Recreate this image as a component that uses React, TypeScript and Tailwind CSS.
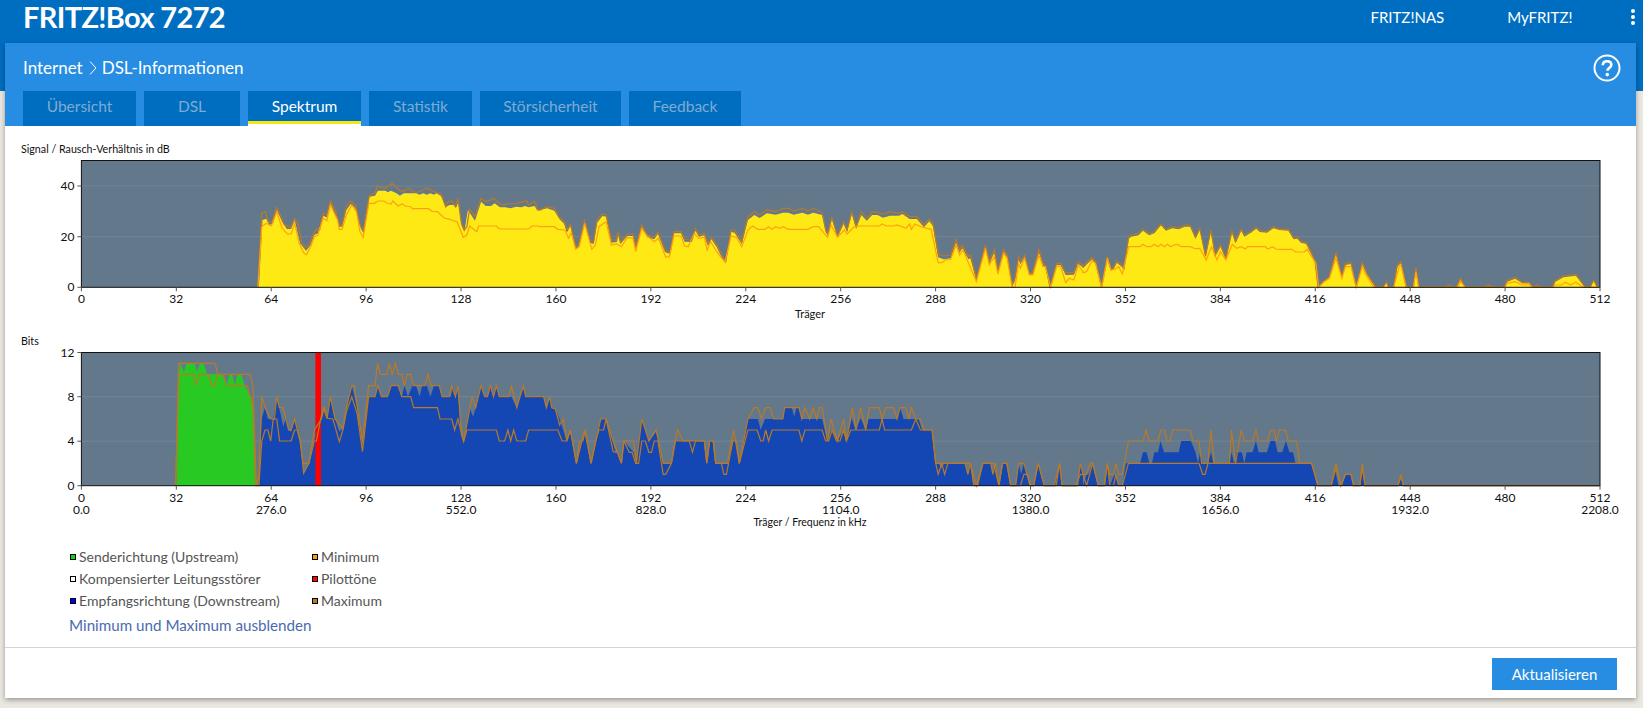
import React from "react";

type P = [number, number];
const sx = 2.8;
const str = (pts: P[]) => pts.map(([x, y]) => `${x.toFixed(1)},${y.toFixed(1)}`).join(" ");

const B1 = 287.3;
const B2 = 485.7;
const z1 = (ox: number, pts: number[][], dy = 0) => pts.map(([x, y]) => [ox + x / sx, Math.min(150 + y / 3 + dy, B1)] as P);
const z3 = (pts: number[][]) => pts.map(([x, y]) => [x / sx, 130 + y / 3] as P);
const z2 = (ox: number, pts: number[][]) => pts.map(([x, y]) => [ox + x / sx, 335 + y / 3] as P);

const max1: P[] = [
  ...z3([[722,472],[733,250],[743,245],[752,278],[762,275],[775,232],[785,255],[795,282],[808,292],[815,290],[825,265],[835,285],[845,340],[857,352],[868,340],[880,305],[890,295],[895,300],[905,250],[915,255],[925,212],[940,245],[950,285],[958,285],[970,228],[982,213],[995,225],[1008,285],[1018,300],[1033,200],[1045,190],[1050,190],[1057,168],[1065,172],[1078,175],[1098,160],[1120,182],[1130,184],[1142,175],[1155,182],[1165,188],[1180,182],[1195,175],[1205,178],[1212,184],[1225,188],[1235,192],[1248,230],[1255,215],[1265,213],[1275,230],[1282,205],[1292,280],[1300,300],[1307,290],[1315,238],[1330,260],[1347,205],[1360,215],[1370,212],[1382,205],[1398,220],[1410,225],[1425,220],[1440,222],[1465,215],[1475,212],[1480,225],[1497,213],[1505,238]]),
  ...z1(540,[[0,180],[20,170],[40,175],[55,203],[68,215],[75,240],[85,222],[100,290],[108,285],[125,212],[140,270],[150,275],[160,210],[175,192],[185,195],[200,270],[215,270],[218,245],[225,275],[245,252],[260,252],[268,290],[285,225],[300,255],[320,262],[330,245],[350,300],[365,305],[375,245],[395,245],[405,268],[425,270],[435,235],[445,255],[460,250],[470,280],[480,262],[495,285],[510,315],[520,335],[535,240],[545,240],[565,275],[582,200],[600,185],[615,195],[635,180],[660,185],[680,175],[695,175],[710,183],[735,175],[750,183],[765,175],[790,187],[800,240],[807,250],[817,200],[833,258],[850,215],[860,240],[873,185],[885,230],[900,185],[915,205],[930,185],[945,187],[960,193],[980,185],[1005,190],[1015,185],[1035,200],[1055,200],[1075,225],[1090,208],[1100,220],[1115,312],[1130,318],[1150,315],[1165,268],[1175,300],[1182,285],[1200,320],[1205,315],[1222,385],[1247,285],[1258,335],[1272,298],[1282,365],[1298,298],[1308,315],[1322,405],[1330,385],[1340,320],[1345,335],[1357,315],[1370,370],[1380,365],[1397,298],[1410,345],[1415,345],[1428,412],[1447,340],[1458,340],[1472,368],[1495,368],[1507,335],[1520,345]]),
  ...z1(1083,[[0,350],[25,322],[35,335],[52,412],[68,320],[78,358],[85,355],[95,332],[108,345],[115,355],[128,260],[135,255],[155,250],[168,238],[185,252],[200,245],[218,222],[232,238],[250,230],[268,235],[285,225],[300,225],[315,262],[327,235],[343,318],[358,240],[370,315],[385,285],[400,325],[417,243],[427,275],[443,238],[452,255],[470,245],[485,232],[495,242],[515,245],[533,230],[550,238],[575,238],[590,265],[600,262],[610,275],[625,278],[640,310],[650,335],[658,412],[668,400],[690,380],[708,307],[725,380],[735,340],[750,338],[765,412],[782,338],[795,370],[810,395],[820,412],[840,412],[850,395],[855,412],[870,412],[880,345],[890,335],[905,412],[925,412],[932,352],[940,412],[1015,412],[1025,405],[1035,412],[1045,412],[1057,385],[1070,412],[1125,412],[1135,405],[1150,412],[1182,412],[1187,392],[1210,382],[1230,398],[1250,398],[1260,412],[1270,405],[1285,412],[1315,412],[1322,392],[1345,378],[1380,373],[1405,410],[1420,412],[1430,390],[1440,412],[1447,412]]),
];

const yellow1: P[] = [
  ...z3([[725,472],[735,270],[745,266],[755,285],[765,280],[775,240],[790,275],[803,297],[815,297],[825,270],[840,340],[857,362],[870,345],[880,315],[890,310],[905,258],[915,262],[925,220],[945,270],[950,290],[958,290],[970,240],[982,222],[995,235],[1010,295],[1018,310],[1035,200],[1050,197],[1058,182],[1080,182],[1085,187],[1095,182],[1110,190],[1120,197],[1130,190],[1165,190],[1175,194],[1185,190],[1195,194],[1205,190],[1215,194],[1222,190],[1235,198],[1248,232],[1258,225],[1270,225],[1278,232],[1284,215],[1292,285],[1300,305],[1310,240],[1330,272],[1347,215],[1360,228],[1375,228],[1385,220],[1400,232],[1415,232],[1430,235],[1445,230],[1460,232],[1470,228],[1480,232],[1497,228],[1505,242]]),
  ...z1(540,[[0,180],[20,175],[40,182],[55,208],[68,222],[75,248],[85,228],[100,296],[108,290],[125,220],[140,278],[150,282],[160,218],[175,198],[185,200],[200,278],[215,276],[218,252],[225,282],[245,258],[260,258],[268,298],[285,232],[300,262],[320,268],[330,252],[350,306],[365,312],[375,250],[395,250],[405,275],[425,276],[435,242],[445,260],[460,256],[470,288],[480,268],[495,292],[510,325],[520,338],[535,246],[545,248],[565,282],[582,210],[600,195],[615,204],[635,190],[660,194],[680,188],[695,188],[710,194],[735,188],[750,194],[765,188],[790,195],[800,246],[807,258],[817,208],[833,262],[850,222],[860,246],[873,192],[885,236],[900,195],[915,212],[930,195],[945,195],[960,203],[980,197],[1005,197],[1015,192],[1035,207],[1055,207],[1075,232],[1090,214],[1100,228],[1115,322],[1130,328],[1150,325],[1165,278],[1175,308],[1182,295],[1200,328],[1205,325],[1222,392],[1247,292],[1258,342],[1272,308],[1282,370],[1298,305],[1308,322],[1322,410],[1330,392],[1340,328],[1345,343],[1357,322],[1370,375],[1380,372],[1397,308],[1410,350],[1415,350],[1428,412],[1447,345],[1458,346],[1472,375],[1495,374],[1507,342],[1520,352]]),
  ...z1(1083,[[0,355],[25,328],[35,340],[52,412],[68,325],[78,362],[85,358],[95,338],[108,350],[115,360],[128,266],[135,260],[155,256],[168,242],[185,256],[200,250],[218,226],[232,242],[250,235],[268,238],[285,230],[300,230],[315,266],[327,240],[343,322],[358,245],[370,320],[385,290],[400,328],[417,248],[427,280],[443,242],[452,260],[470,248],[485,236],[495,246],[515,248],[533,235],[550,240],[575,242],[590,268],[600,266],[610,278],[625,282],[640,314],[650,340],[658,412],[668,402],[690,384],[708,312],[725,384],[735,345],[750,342],[765,412],[782,342],[795,374],[810,398],[820,412],[840,412],[850,398],[855,412],[870,412],[880,350],[890,340],[905,412],[925,412],[932,356],[940,412],[1045,412],[1057,390],[1070,412],[1182,412],[1187,396],[1210,386],[1230,400],[1250,400],[1260,412],[1315,412],[1322,396],[1345,382],[1380,377],[1405,412],[1420,412],[1430,394],[1440,412],[1447,412]]),
];

const min1: P[] = [
  ...z3([[722,472],[733,290],[745,280],[760,288],[775,245],[790,295],[805,312],[815,312],[825,280],[838,340],[850,368],[858,374],[870,350],[880,320],[890,315],[905,265],[915,272],[925,225],[945,270],[950,298],[958,298],[970,255],[985,225],[998,245],[1008,305],[1017,322],[1033,220],[1048,220],[1058,213],[1075,213],[1085,220],[1095,222],[1100,213],[1115,228],[1125,222],[1135,228],[1150,230],[1155,236],[1200,236],[1210,244],[1225,245],[1245,265],[1260,268],[1268,272],[1280,275],[1297,322],[1307,315],[1315,288],[1335,305],[1340,288],[1390,288],[1398,297],[1480,297],[1490,288],[1505,288]]),
  ...z1(540,[[0,230],[40,230],[50,238],[70,240],[80,265],[87,248],[100,298],[110,290],[125,220],[145,298],[155,285],[165,230],[185,215],[200,285],[215,282],[228,290],[245,262],[260,265],[268,305],[285,235],[300,258],[320,275],[332,265],[352,322],[362,320],[375,258],[395,258],[405,288],[415,290],[432,250],[445,265],[460,262],[468,300],[478,275],[495,305],[505,320],[518,336],[535,258],[550,262],[565,290],[582,240],[595,228],[610,238],[630,238],[640,230],[650,238],[660,230],[672,235],[680,230],[695,238],[750,238],[765,230],[780,230],[805,262],[815,225],[833,262],[852,240],[860,252],[880,230],[900,228],[950,228],[958,222],[970,228],[990,228],[1000,225],[1025,235],[1035,222],[1040,238],[1050,222],[1070,232],[1095,238],[1115,338],[1125,338],[1135,330],[1150,328],[1165,285],[1175,315],[1185,300],[1200,340],[1222,395],[1247,295],[1258,345],[1272,320],[1282,372],[1298,310],[1308,325],[1322,412],[1330,412],[1340,340],[1345,355],[1357,325],[1370,375],[1380,375],[1397,315],[1408,350],[1415,350],[1430,412],[1447,348],[1458,350],[1472,398],[1482,385],[1495,390],[1507,345],[1520,365]]),
  ...z1(1083,[[0,368],[10,365],[25,332],[35,340],[52,412],[68,325],[78,360],[90,358],[100,350],[110,372],[128,290],[160,290],[168,283],[178,290],[190,290],[200,283],[210,290],[218,283],[228,290],[236,283],[245,290],[255,285],[265,283],[275,290],[300,290],[315,296],[327,295],[345,330],[360,290],[375,330],[385,305],[400,330],[418,283],[430,295],[443,290],[455,297],[460,290],[510,290],[518,297],[530,290],[540,297],[550,298],[585,298],[595,306],[620,306],[628,298],[640,320],[652,340],[660,412],[675,395],[690,385],[708,325],[725,385],[735,350],[750,350],[765,412],[782,350],[795,380],[815,412],[870,412],[885,350],[890,345],[905,412],[925,412],[932,365],[940,412],[1050,412],[1057,395],[1070,412],[1182,412],[1187,400],[1210,395],[1230,405],[1250,405],[1258,412],[1315,412],[1322,405],[1340,405],[1350,397],[1365,405],[1380,397],[1400,412],[1447,412]]),
];

const green: P[] = z2(0,[[495,452],[500,118],[505,85],[515,110],[522,85],[545,85],[552,110],[560,85],[570,85],[580,118],[622,118],[635,150],[642,118],[650,118],[658,150],[665,118],[675,118],[685,150],[692,165],[705,190],[710,218],[716,452]]);

const blue: P[] = [
  ...z2(0,[[718,452],[725,452],[733,250],[742,218],[750,252],[765,252],[775,190],[785,235],[793,275],[800,250],[808,285],[815,290],[825,252],[838,300],[850,415],[865,385],[880,318],[900,250],[908,218],[916,250],[925,185],[935,240],[950,290],[960,280],[970,220],[985,152],[1000,220],[1015,335],[1032,185],[1050,185],[1058,152],[1068,185],[1085,185],[1095,152],[1115,152],[1125,185],[1133,152],[1142,185],[1155,152],[1165,152],[1175,185],[1182,152],[1195,152],[1205,185],[1215,152],[1228,152],[1238,185],[1262,185],[1268,155],[1275,185],[1282,155],[1290,300],[1298,320],[1315,218],[1325,245],[1347,152],[1358,185],[1365,185],[1373,152],[1380,185],[1390,152],[1398,185],[1432,185],[1447,218],[1465,160],[1472,185],[1505,185]]),
  ...z2(540,[[0,185],[10,185],[18,218],[27,185],[33,218],[43,222],[55,252],[65,285],[75,318],[85,285],[102,385],[117,318],[127,285],[143,385],[155,318],[170,252],[185,252],[203,318],[212,352],[220,352],[228,385],[235,318],[262,352],[270,385],[285,252],[295,285],[305,318],[325,290],[345,385],[368,385],[378,318],[460,318],[467,385],[475,318],[485,318],[492,385],[525,385],[540,318],[550,318],[558,385],[582,252],[610,252],[618,285],[630,252],[680,252],[685,218],[705,218],[712,245],[718,218],[725,218],[733,252],[790,252],[805,318],[815,285],[833,318],[850,285],[858,318],[873,250],[883,285],[898,250],[912,285],[920,252],[1000,252],[1008,218],[1018,252],[1060,252],[1070,285],[1098,285],[1108,385],[1115,385],[1125,400],[1132,385],[1190,385],[1198,420],[1205,385],[1213,452],[1225,452],[1240,385],[1262,385],[1268,420],[1275,385],[1285,452],[1295,385],[1307,385],[1318,452],[1332,452],[1340,385],[1347,418],[1355,385],[1372,452],[1382,452],[1395,385],[1412,452],[1440,452],[1455,385],[1462,452],[1505,452],[1513,385],[1520,418]]),
  ...z2(1083,[[0,452],[10,418],[15,418],[27,385],[43,452],[60,452],[68,385],[75,452],[88,418],[100,452],[110,452],[120,385],[160,385],[168,352],[178,352],[186,385],[193,385],[200,352],[210,352],[217,318],[227,352],[268,352],[275,318],[302,318],[315,352],[322,385],[328,352],[335,385],[350,385],[358,352],[365,385],[410,385],[416,352],[423,385],[430,352],[445,352],[452,385],[458,352],[475,352],[484,318],[492,352],[515,352],[525,318],[538,318],[545,352],[558,352],[568,318],[578,352],[588,352],[595,385],[640,385],[658,452],[695,452],[705,400],[715,452],[725,452],[735,418],[750,418],[758,452],[775,452],[782,400],[790,452],[882,452],[890,420],[897,452],[1447,452]]),
];

const max2: P[] = [
  ...z2(0,[[492,452],[500,85],[602,85],[610,118],[700,118],[708,150],[716,400],[718,452],[725,420],[733,185],[745,225],[758,252],[768,252],[775,185],[782,218],[792,218],[808,285],[815,285],[825,252],[840,318],[848,385],[865,385],[880,285],[900,252],[908,218],[916,250],[925,185],[938,252],[960,280],[970,218],[985,152],[992,152],[1015,320],[1032,152],[1050,152],[1057,85],[1065,118],[1083,118],[1090,85],[1098,118],[1107,85],[1115,118],[1125,118],[1133,152],[1140,118],[1150,118],[1158,152],[1190,152],[1198,118],[1207,152],[1230,152],[1238,185],[1258,185],[1265,152],[1275,185],[1282,152],[1290,270],[1298,320],[1322,185],[1332,218],[1347,152],[1357,185],[1365,185],[1373,152],[1382,185],[1390,152],[1398,185],[1425,185],[1432,152],[1447,218],[1465,152],[1472,185],[1505,185]]),
  ...z2(540,[[0,185],[10,185],[18,218],[27,185],[33,218],[43,222],[55,270],[65,252],[75,318],[85,285],[102,385],[125,285],[143,385],[170,252],[185,252],[205,318],[228,385],[235,318],[262,318],[270,385],[285,252],[295,285],[305,318],[325,285],[345,385],[368,385],[385,285],[400,318],[460,318],[467,385],[475,318],[485,318],[492,385],[525,385],[542,285],[558,385],[582,252],[600,218],[610,218],[620,252],[632,218],[645,218],[655,252],[680,252],[685,218],[725,218],[733,252],[742,218],[755,252],[765,218],[775,252],[782,218],[790,218],[805,318],[815,252],[833,318],[850,252],[858,318],[875,218],[885,285],[898,218],[912,285],[922,218],[950,218],[958,252],[968,218],[990,218],[1000,252],[1008,218],[1025,218],[1033,252],[1040,218],[1052,252],[1065,252],[1075,285],[1098,285],[1108,385],[1205,385],[1222,452],[1240,385],[1270,385],[1285,452],[1295,385],[1307,385],[1318,452],[1332,452],[1340,385],[1355,385],[1372,452],[1382,452],[1395,385],[1412,452],[1440,452],[1455,385],[1462,452],[1505,452],[1513,385]]),
  ...z2(1083,[[0,418],[10,418],[20,385],[27,385],[43,452],[60,452],[68,385],[75,418],[85,418],[92,385],[100,418],[110,418],[127,318],[168,318],[177,285],[185,318],[210,318],[218,285],[228,285],[235,318],[243,318],[252,285],[300,285],[308,318],[325,318],[332,385],[350,385],[358,285],[368,385],[410,385],[416,285],[427,385],[443,285],[452,318],[475,318],[484,285],[492,318],[517,318],[525,285],[535,285],[541,318],[550,285],[567,285],[575,318],[598,318],[607,385],[640,385],[658,452],[695,452],[708,385],[722,452],[735,418],[750,418],[758,452],[775,452],[782,385],[790,452],[882,452],[890,418],[897,452],[1447,452]]),
];

const min2: P[] = [
  ...z2(0,[[492,452],[500,118],[542,118],[550,152],[558,118],[583,118],[593,152],[602,150],[610,118],[625,118],[635,152],[692,152],[708,218],[716,452],[725,452],[733,318],[742,285],[750,285],[758,318],[765,252],[775,252],[783,318],[815,318],[825,285],[833,285],[842,318],[850,415],[865,385],[880,318],[886,318],[898,252],[905,218],[916,250],[932,252],[950,320],[960,285],[970,230],[985,185],[1000,235],[1015,350],[1032,185],[1050,185],[1058,152],[1068,185],[1085,185],[1095,152],[1115,152],[1125,185],[1150,185],[1158,218],[1225,218],[1232,252],[1265,252],[1273,285],[1282,252],[1298,320],[1307,285],[1390,285],[1398,318],[1413,318],[1422,285],[1430,318],[1438,285],[1447,318],[1472,318],[1480,285],[1505,285]]),
  ...z2(540,[[0,285],[50,285],[62,318],[75,318],[85,285],[102,385],[110,318],[120,318],[127,285],[143,385],[155,318],[165,285],[178,285],[185,252],[205,350],[218,352],[228,385],[235,318],[250,352],[258,352],[268,385],[276,385],[285,318],[295,318],[305,352],[312,352],[320,318],[330,318],[345,418],[352,418],[368,385],[378,318],[418,318],[427,352],[435,318],[460,318],[467,385],[475,318],[485,318],[492,385],[508,385],[515,418],[522,418],[540,318],[550,318],[558,385],[582,285],[608,285],[618,318],[625,318],[632,285],[640,318],[650,285],[725,285],[733,318],[742,285],[790,285],[800,318],[808,318],[818,285],[830,318],[840,318],[850,285],[858,318],[870,285],[950,285],[958,252],[965,285],[1040,285],[1052,252],[1065,285],[1098,285],[1108,385],[1115,418],[1125,385],[1133,418],[1142,385],[1190,385],[1198,418],[1205,385],[1215,452],[1225,452],[1240,385],[1262,385],[1268,418],[1275,385],[1285,452],[1295,385],[1307,385],[1318,452],[1345,452],[1355,418],[1365,418],[1375,452],[1382,452],[1395,385],[1412,452],[1445,452],[1455,385],[1462,452],[1500,452],[1513,418]]),
  ...z2(1083,[[0,418],[10,452],[27,385],[43,452],[60,452],[68,385],[75,452],[85,452],[92,418],[100,452],[110,452],[127,385],[325,385],[335,418],[342,418],[350,385],[640,385],[658,452],[695,452],[708,400],[722,452],[735,418],[750,418],[758,452],[775,452],[782,400],[790,452],[882,452],[890,425],[897,452],[1447,452]]),
];

const X0 = 81.4;
const X1 = 1600;
const ticks = Array.from({ length: 17 }, (_, i) => i * 32);
const tx = (c: number) => X0 + (c * (X1 - X0)) / 512;
const freqs: Record<number, string> = { 0: "0.0", 64: "276.0", 128: "552.0", 192: "828.0", 256: "1104.0", 320: "1380.0", 384: "1656.0", 448: "1932.0", 512: "2208.0" };

const BG = "#64788c";
const GRID = "#70849a";
const BROWN = "#b87a28";
const ORANGE = "#ffa010";
const tickText = "fill-[#111] text-[12px]";

function Chart1() {
  const top = 160.5;
  return (
    <svg viewBox="5 155 1631 167" className="block h-[167px] w-[1631px]">
      <rect x={X0} y={top} width={X1 - X0} height={B1 - top} fill={BG} />
      {[186, 236.7].map((y) => <line key={y} x1={X0} x2={X1} y1={y} y2={y} stroke={GRID} strokeWidth="1" />)}
      <polygon points={str(yellow1)} fill="#ffe914" />
      <polyline points={str(max1)} fill="none" stroke={BROWN} strokeWidth="1.2" />
      <polyline points={str(min1)} fill="none" stroke={ORANGE} strokeWidth="1.2" />
      <rect x={X0} y={top} width={X1 - X0} height={B1 - top} fill="none" stroke="#111" strokeWidth="1" />
      {[[0, B1], [20, 236.7], [40, 186]].map(([v, y]) => (
        <g key={v}>
          <line x1={X0 - 4} x2={X0} y1={y} y2={y} stroke="#555" />
          <text x={X0 - 7} y={y + 4} textAnchor="end" className={tickText}>{v}</text>
        </g>
      ))}
      {ticks.map((c) => (
        <g key={c}>
          <line x1={tx(c)} x2={tx(c)} y1={B1} y2={B1 + 4} stroke="#555" />
          <text x={tx(c)} y={B1 + 16} textAnchor="middle" className={tickText}>{c}</text>
        </g>
      ))}
      <text x="810" y="318" textAnchor="middle" className="fill-[#111] text-[11px]">Träger</text>
    </svg>
  );
}

function Chart2() {
  const top = 352.5;
  return (
    <svg viewBox="5 346 1631 184" className="block h-[184px] w-[1631px]">
      <rect x={X0} y={top} width={X1 - X0} height={B2 - top} fill={BG} />
      {[396.7, 441.2].map((y) => <line key={y} x1={X0} x2={X1} y1={y} y2={y} stroke={GRID} strokeWidth="1" />)}
      <polygon points={str(blue)} fill="#1447b4" />
      <polygon points={str(green)} fill="#28c922" />
      <rect x="315.4" y={top} width="5.6" height={B2 - top} fill="#ff0000" />
      <polyline points={str(max2)} fill="none" stroke={BROWN} strokeWidth="1.2" />
      <polyline points={str(min2)} fill="none" stroke={BROWN} strokeWidth="1.2" />
      <rect x={X0} y={top} width={X1 - X0} height={B2 - top} fill="none" stroke="#111" strokeWidth="1" />
      {[[0, B2], [4, 441.2], [8, 396.7], [12, top]].map(([v, y]) => (
        <g key={v}>
          <line x1={X0 - 4} x2={X0} y1={y} y2={y} stroke="#555" />
          <text x={X0 - 7} y={y + 4} textAnchor="end" className={tickText}>{v}</text>
        </g>
      ))}
      {ticks.map((c) => (
        <g key={c}>
          <line x1={tx(c)} x2={tx(c)} y1={B2} y2={B2 + 4} stroke="#555" />
          <text x={tx(c)} y={B2 + 16} textAnchor="middle" className={tickText}>{c}</text>
          {freqs[c] && <text x={tx(c)} y={B2 + 28} textAnchor="middle" className={tickText}>{freqs[c]}</text>}
        </g>
      ))}
      <text x="810" y="526" textAnchor="middle" className="fill-[#111] text-[10.5px]">Träger / Frequenz in kHz</text>
    </svg>
  );
}

const tabs = [
  { t: "Übersicht", w: "w-[113px]" },
  { t: "DSL", w: "w-[96px]" },
  { t: "Spektrum", w: "w-[113px]", active: true },
  { t: "Statistik", w: "w-[103px]" },
  { t: "Störsicherheit", w: "w-[141px]" },
  { t: "Feedback", w: "w-[112px]" },
];

function Legend({ color, label }: { color: string; label: string }) {
  return (
    <div className="flex h-[22px] items-center text-[14px] text-[#555]">
      <span className={`mr-[3px] mt-[2px] h-[6px] w-[6px] border border-black ${color}`} />
      <span>{label}</span>
    </div>
  );
}

export default function App() {
  return (
    <div className="h-[708px] w-[1643px] overflow-hidden bg-[#ebe8e1] font-['Lato','Noto_Sans',sans-serif]">
      <header className="flex h-[91px] items-start bg-[#006ec0] text-white">
        <div className="ml-[23px] mt-[-1px] text-[29px] font-bold leading-[36px] tracking-[-0.65px]">FRITZ!Box 7272</div>
        <nav className="ml-auto mr-[8px] flex h-[34px] items-center text-[15px]">
          <span className="mr-[63px]">FRITZ!NAS</span>
          <span className="mr-[58px]">MyFRITZ!</span>
          <span className="flex flex-col gap-[1.5px]">
            <i className="h-[4.5px] w-[4.5px] rounded-full bg-white" />
            <i className="h-[4.5px] w-[4.5px] rounded-full bg-white" />
            <i className="h-[4.5px] w-[4.5px] rounded-full bg-white" />
          </span>
        </nav>
      </header>
      <main className="relative ml-[5px] mt-[-48px] h-[655px] w-[1631px] bg-white shadow-[0_2px_5px_rgba(0,0,0,0.35)]">
        <div className="h-[83px] bg-[#268de3] text-white">
          <div className="flex h-[48px] items-center justify-between pl-[18px] pr-[15px] pt-[2px]">
            <div className="flex items-center text-[17px]">
              <span>Internet</span>
              <svg width="8" height="16" viewBox="0 0 8 16" className="ml-[6px] mr-[5px]"><path d="M1 1.5 L7 8 L1 14.5" fill="none" stroke="#fff" strokeWidth="1" /></svg>
              <span>DSL-Informationen</span>
            </div>
            <svg width="28" height="28" viewBox="0 0 28 28" className="mb-[1px]">
              <circle cx="14" cy="14" r="12.5" fill="none" stroke="#fff" strokeWidth="2" />
              <path d="M9.8 11.2c0-2.6 1.9-4 4.3-4s4.2 1.4 4.2 3.6c0 1.8-1 2.6-2.2 3.4-1.1.7-1.7 1.3-1.7 2.6" fill="none" stroke="#fff" strokeWidth="2.6" />
              <circle cx="14.3" cy="20.6" r="1.8" fill="#fff" />
            </svg>
          </div>
          <div className="flex h-[35px] gap-[8px] pl-[18px] text-[15.5px]">
            {tabs.map((tab) => (
              <div key={tab.t} className={`${tab.w} h-[35px] ${tab.active ? "bg-white" : "bg-[#006ec0]"}`}>
                <div className={`h-[33px] bg-[#006ec0] pt-[4px] text-center ${tab.active ? "border-b-[3px] border-[#f7e614] text-white" : "text-[#7fabd2]"}`}>
                  {tab.t}
                </div>
              </div>
            ))}
          </div>
        </div>
        <div className="flex h-[29px] items-end pl-[16px] text-[10.7px] leading-[12px] text-[#111]">Signal / Rausch-Verhältnis in dB</div>
        <Chart1 />
        <div className="flex h-[24px] items-end pl-[16px] text-[10.7px] leading-[10px] text-[#111]">Bits</div>
        <Chart2 />
        <section className="pl-[65px] pt-[15px]">
          <div className="grid w-[330px] grid-cols-[242px_1fr]">
            <Legend color="bg-[#00e000]" label="Senderichtung (Upstream)" />
            <Legend color="bg-[#ffa000]" label="Minimum" />
            <Legend color="bg-white" label="Kompensierter Leitungsstörer" />
            <Legend color="bg-[#ff0000]" label="Pilottöne" />
            <Legend color="bg-[#0000ff]" label="Empfangsrichtung (Downstream)" />
            <Legend color="bg-[#b87a28]" label="Maximum" />
          </div>
          <div className="ml-[-1px] mt-[2px] text-[15.2px] leading-[24px] text-[#4a6bb0]">Minimum und Maximum ausblenden</div>
        </section>
        <footer className="absolute bottom-0 left-0 right-0 flex h-[51px] items-start justify-end border-t border-[#d4d4d4] pr-[19px] pt-[10px]">
          <button className="h-[32px] w-[125px] bg-[#268de3] text-[15px] text-white">Aktualisieren</button>
        </footer>
      </main>
    </div>
  );
}
